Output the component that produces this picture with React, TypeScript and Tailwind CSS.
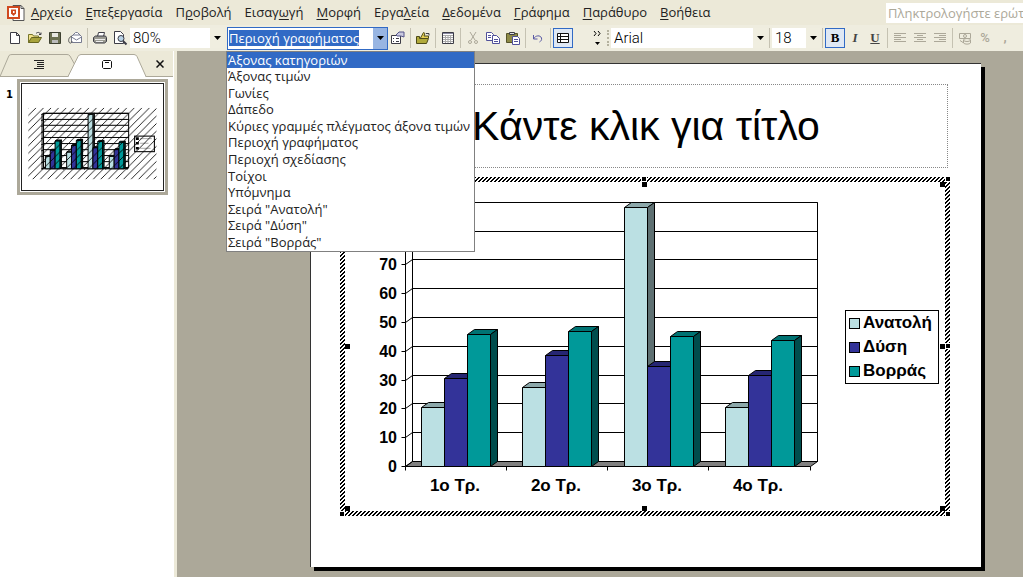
import { useEffect, useRef } from 'react';
import type { ReactNode } from 'react';

const menus = [
  ['', 'Α', 'ρχείο'],
  ['', 'Ε', 'πεξεργασία'],
  ['Π', 'ρ', 'οβολή'],
  ['Εισαγ', 'ω', 'γή'],
  ['', 'Μ', 'ορφή'],
  ['Εργα', 'λ', 'εία'],
  ['', 'Δ', 'εδομένα'],
  ['', 'Γ', 'ράφημα'],
  ['', 'Π', 'αράθυρο'],
  ['', 'Β', 'οήθεια'],
];

const chartObjects = [
  'Άξονας κατηγοριών',
  'Άξονας τιμών',
  'Γωνίες',
  'Δάπεδο',
  'Κύριες γραμμές πλέγματος άξονα τιμών',
  'Περιοχή γραφήματος',
  'Περιοχή σχεδίασης',
  'Τοίχοι',
  'Υπόμνημα',
  'Σειρά "Ανατολή"',
  'Σειρά "Δύση"',
  'Σειρά "Βορράς"',
];

const series = [
  { name: 'Ανατολή', front: '#bbe0e3', top: '#8ca8aa', side: '#5e7072', values: [20.4, 27.4, 90, 20.4] },
  { name: 'Δύση', front: '#333399', top: '#262673', side: '#1a1a4d', values: [30.6, 38.6, 34.6, 31.6] },
  { name: 'Βορράς', front: '#009999', top: '#007373', side: '#004d4d', values: [45.9, 46.9, 45, 43.9] },
];

const categories = ['1ο Τρ.', '2ο Τρ.', '3ο Τρ.', '4ο Τρ.'];
const ticks = [0, 10, 20, 30, 40, 50, 60, 70, 80, 90];

const baseY = 289;
const yOf = (v: number) => baseY - Math.round(v * 2.88);

function Plot() {
  return (
    <g stroke="#000" strokeWidth="1" transform="translate(0.5 0.5)">
      <path d="M65 289 72 284H477L470 289Z" fill="#808080" vectorEffect="non-scaling-stroke" />
      <path d="M72 25H477V284M72 25V284M65 30V289M65 30 72 25" fill="none" vectorEffect="non-scaling-stroke" />
      {ticks.map((t) => (
        <path
          key={t}
          d={`M61 ${yOf(t)}H65L72 ${yOf(t) - 5}H477`}
          fill="none"
          vectorEffect="non-scaling-stroke"
        />
      ))}
      <path d="M65 289V293M166 289V293M267 289V293M368 289V293M470 289V293" vectorEffect="non-scaling-stroke" />
      {categories.map((c, i) =>
        series.map((s, j) => {
          const x = Math.round(81 + i * 101.4) + j * 23;
          const y = yOf(s.values[i]);
          return (
            <g key={c + s.name} strokeLinejoin="round">
              <path d={`M${x} ${y}l7-5h23l-7 5z`} fill={s.top} vectorEffect="non-scaling-stroke" />
              <path d={`M${x + 23} ${y}l7-5V284l-7 5z`} fill={s.side} vectorEffect="non-scaling-stroke" />
              <path d={`M${x} ${y}h23V289h-23z`} fill={s.front} vectorEffect="non-scaling-stroke" />
            </g>
          );
        }),
      )}
    </g>
  );
}

function Chart() {
  const handles = [
    [302, 0], [606, 0],
    [606, 167],
    [0, 335], [606, 335],
  ];
  const inner = [
    [5, 5], [302, 5], [600, 5],
    [5, 167], [600, 167],
    [5, 329], [302, 329], [600, 329],
  ];
  return (
    <svg viewBox="0 0 610 339" className="block w-full" role="img" aria-label="Γράφημα">
      <defs>
        <pattern id="hatch" width="4" height="4" patternUnits="userSpaceOnUse">
          <path d="M2 0h2v1h-2zM1 1h2v1h-2zM0 2h2v1h-2zM3 3h1v1h-1zM0 3h1v1h-1z" fill="#000" />
        </pattern>
      </defs>
      <path d="M0 0H610V339H0ZM5 5V334H605V5Z" fillRule="evenodd" fill="url(#hatch)" />
      {handles.map(([x, y]) => (
        <rect key={`${x}-${y}`} x={x} y={y} width="4" height="4" stroke="#fff" strokeWidth="2" paintOrder="stroke" />
      ))}
      {inner.map(([x, y]) => (
        <rect key={`${x}-${y}`} x={x} y={y} width="5" height="5" />
      ))}
      <Plot />
      <g fontFamily="'Liberation Sans', Arial, sans-serif" fontWeight="700" fontSize="16">
        {ticks.map((t) => (
          <text key={t} x="57" y={yOf(t) + 6} textAnchor="end">{t}</text>
        ))}
        {categories.map((c, i) => (
          <text key={c} x={115 + i * 101} y="314" textAnchor="middle" fontSize="17">{c}</text>
        ))}
        <rect x="505.5" y="133.5" width="93" height="73" fill="#fff" stroke="#000" />
        {series.map((s, i) => (
          <g key={s.name}>
            <rect x="509.5" y={141.5 + i * 24} width="10" height="10" fill={s.front} stroke="#000" />
            <text x="523" y={151 + i * 24} fontSize="17">{s.name}</text>
          </g>
        ))}
      </g>
    </svg>
  );
}

function Thumbnail() {
  return (
    <svg viewBox="0 0 671 504" className="block w-full" aria-hidden="true">
      <defs>
        <pattern id="thumbHatch" width="36" height="36" patternUnits="userSpaceOnUse">
          <path d="M-4 40 40-4M-22 22 22-22M14 58 58 14" stroke="#000" strokeWidth="4" />
        </pattern>
      </defs>
      <g transform="translate(30 114)">
        <Plot />
        <rect x="506" y="134" width="94" height="74" fill="#fff" stroke="#000" strokeWidth="5" />
        <path d="M512 146h14M512 168h14M512 192h14" stroke="#000" strokeWidth="12" />
        <path d="M532 146h56M532 168h40M532 192h50" stroke="#999" strokeWidth="4" />
        <rect width="610" height="339" fill="url(#thumbHatch)" />
      </g>
    </svg>
  );
}

function Icon({ children }: { children: ReactNode }) {
  return (
    <svg viewBox="0 0 16 16" className="size-4" fill="none" stroke="#3c3c46" aria-hidden="true">
      {children}
    </svg>
  );
}

const Caret = () => (
  <svg viewBox="0 0 7 4" className="h-1 w-[7px]" aria-hidden="true">
    <path d="M0 0h7L3.5 4z" />
  </svg>
);

function Tool({ label, active, children }: { label: string; active?: boolean; children: ReactNode }) {
  return (
    <button
      aria-label={label}
      className={`flex h-5 w-5 shrink-0 items-center justify-center ${active ? 'border border-[#316ac5] bg-[#dfe8f4]' : ''}`}
    >
      {children}
    </button>
  );
}

const Sep = () => <span className="mx-0.5 h-5 w-px shrink-0 bg-[#c5c2b2]" />;

function Picker({ label, value, className }: { label: string; value: string; className: string }) {
  return (
    <div className={`relative flex h-5 shrink-0 items-center ${className}`}>
      <select
        aria-label={label}
        defaultValue={value}
        className="h-5 w-full appearance-none bg-linear-to-l from-[#f0eee0] from-[14px] to-white to-[14px] pl-[3px] text-[15px] leading-5 outline-none"
      >
        <option>{value}</option>
      </select>
      <span className="pointer-events-none absolute right-[3px]">
        <Caret />
      </span>
    </div>
  );
}

function ObjectCombo() {
  const ref = useRef<HTMLInputElement>(null);

  useEffect(() => {
    ref.current?.focus();
    ref.current?.select();
  }, []);

  return (
    <div className="relative ml-[3px] flex h-[23px] w-[161px] shrink-0 border border-[#316ac5] bg-white font-['Open_Sans',sans-serif] text-[13px] leading-4 font-normal">
      <input
        ref={ref}
        role="combobox"
        aria-label="Αντικείμενα γραφήματος"
        aria-expanded="true"
        aria-controls="chart-objects"
        defaultValue="Περιοχή γραφήματος"
        className="min-w-0 flex-1 pl-px outline-none selection:bg-[#316ac5] selection:text-white"
      />
      <button aria-label="Άνοιγμα λίστας" className="flex w-3.5 items-center justify-center bg-[#98b5e2]">
        <Caret />
      </button>
      <ul
        id="chart-objects"
        role="listbox"
        className="absolute -left-0.5 top-[23px] z-10 grid h-[201px] w-[249px] auto-rows-fr grid-cols-1 border border-[#808080] bg-white text-[#222]"
      >
        {chartObjects.map((name, i) => (
          <li
            key={name}
            role="option"
            aria-selected={i === 0}
            className={`whitespace-nowrap pl-px ${i === 0 ? 'bg-[#316ac5] text-white' : ''}`}
          >
            {name}
          </li>
        ))}
      </ul>
    </div>
  );
}

function MenuBar() {
  return (
    <nav className="flex h-[25px] items-center pl-[7px] font-['Open_Sans',sans-serif] text-[13px] leading-5 font-normal text-[#222]">
      <svg viewBox="0 0 18 18" className="mr-1.5 size-[18px] shrink-0" aria-hidden="true">
        <path d="M6 1.500h8l3 3v12H6z" fill="#fff" stroke="#555" />
        <path d="M14 1.500v3h3" fill="none" stroke="#555" />
        <rect x="1" y="3" width="11" height="11" fill="#fff" stroke="#d04a20" strokeWidth="2" />
        <path d="M4 5.500h5v4l-2.500 2.500L4 9.500z" fill="#d04a20" />
        <path d="M6 7h1.500v2H6z" fill="#fff" />
      </svg>
      <div className="flex gap-[13px] pb-0.5 whitespace-nowrap">
        {menus.map(([before, key, after]) => (
          <button key={before + key + after}>
            {before}
            <u className="underline-offset-2">{key}</u>
            {after}
          </button>
        ))}
      </div>
      <input
        aria-label="Ερώτηση"
        placeholder="Πληκτρολογήστε ερώτηση"
        className="ml-auto h-5 w-[137px] shrink-0 bg-white pl-0.5 outline-none placeholder:text-[#aca899]"
      />
    </nav>
  );
}

function Toolbar() {
  return (
    <div className="flex h-[26px] items-center bg-[#efeddf] pl-[5px]">
      <Tool label="Δημιουργία">
        <Icon><path d="M3.500 2.500h6l3 3v8h-9zM9.500 2.500v3h3" fill="#fff" /></Icon>
      </Tool>
      <Tool label="Άνοιγμα">
        <Icon>
          <path d="M1.500 12.500v-8h4l1 1.500h5v2" fill="#f3e28a" stroke="#77762a" />
          <path d="M1.500 12.500l3-5h10l-3 5z" fill="#a8a33c" stroke="#66651f" />
          <path d="M9 3.500c2-2 4-1 4.500 1M12 4.500h2v-2" />
        </Icon>
      </Tool>
      <Tool label="Αποθήκευση">
        <Icon>
          <path d="M2.500 2.500h11v11h-11z" fill="#6c7050" stroke="#3d4030" />
          <path d="M5 3h6v4H5z" fill="#e8e8e0" stroke="none" />
          <path d="M5 10h6v3H5z" fill="#bbb" stroke="none" />
        </Icon>
      </Tool>
      <Tool label="Αποστολή">
        <Icon>
          <path d="M4.500 6.500l4-4h2l4 4v6h-10z" fill="#fff" stroke="#777b90" />
          <path d="M4.500 7l5 3 5-3M6 5h7" stroke="#777b90" />
          <path d="M5 6c-3 1-4 4-3 6 1 2 3 1 3-1" stroke="#555" />
        </Icon>
      </Tool>
      <Sep />
      <Tool label="Εκτύπωση">
        <Icon>
          <path d="M5.500 6.500l1-4h6l-1 4" fill="#fff" />
          <path d="M1.500 7.500l2-1.500h10l1 1.500v4l-2 1.500h-9l-2-1.500z" fill="#9a9a92" />
          <path d="M3 9.500h10M4 11.500h7" stroke="#eee" />
        </Icon>
      </Tool>
      <Tool label="Προεπισκόπηση">
        <Icon>
          <path d="M2.500 1.500h6l3 3v9h-9z" fill="#fff" />
          <circle cx="9" cy="8.500" r="3" fill="#b9d3e6" />
          <path d="M11 11l3.500 3.500" strokeWidth="2" />
        </Icon>
      </Tool>
      <Picker label="Ζουμ" value="80%" className="w-[94px]" />
      <ObjectCombo />
      <Tool label="Μορφοποίηση">
        <Icon>
          <path d="M1.500 5.500h9v8h-9zM3 8.500h1M3 11.500h1M6 8.500h3M6 11.500h3" fill="#fff" />
          <path d="M6 5l3-3h5v5l-3-1H7z" fill="#c9c9df" stroke="#55558a" />
        </Icon>
      </Tool>
      <Sep />
      <Tool label="Τύπος γραφήματος">
        <Icon>
          <path d="M5.500 8l3-5.500 1.500 1-1 2.500h4.500v2" fill="#e5cf55" stroke="#4d4a18" />
          <path d="M1.500 13.500v-7h3v2h9l-2 5z" fill="#b1aa3a" stroke="#4d4a18" />
          <path d="M11 3.500h3v2" />
        </Icon>
      </Tool>
      <Sep />
      <Tool label="Πίνακας δεδομένων">
        <Icon>
          <path d="M2.500 2.500h11v11h-11z" fill="#fff" />
          <path d="M3 3.500h10" stroke="#8888a0" />
          <path d="M3 5.500h10M3 7.500h10M3 9.500h10M3 11.500h10M5.500 5v8M8 5v8M10.500 5v8" stroke="#aaa" />
        </Icon>
      </Tool>
      <Sep />
      <Tool label="Αποκοπή">
        <Icon>
          <g stroke="#aca899">
            <path d="M5 2l5 8M11 2L6 10" />
            <circle cx="5" cy="12" r="1.500" />
            <circle cx="11" cy="12" r="1.500" />
          </g>
        </Icon>
      </Tool>
      <Tool label="Αντιγραφή">
        <Icon>
          <g fill="#fff" stroke="#50509a">
            <path d="M1.500 2.500h5l2 2v6h-7zM3 5.500h3M3 7.500h3" />
            <path d="M7.500 5.500h4l3 3v5h-7zM9 9.500h4M9 11.500h4" />
          </g>
        </Icon>
      </Tool>
      <Tool label="Επικόλληση">
        <Icon>
          <path d="M1.500 3.500h11v9h-11z" fill="#8d8a45" stroke="#55532a" />
          <path d="M4.500 2.500h5v2h-5z" fill="#ddd" />
          <path d="M7.500 6.500h5l2 2v6h-7zM9 9.500h4M9 11.500h4" fill="#fff" stroke="#50509a" />
        </Icon>
      </Tool>
      <Sep />
      <Tool label="Αναίρεση">
        <Icon>
          <path d="M3.500 5v4h4M3.500 9c2-4 7-4 8-1 .5 2-.5 3-2 4" stroke="#5a5aa5" />
        </Icon>
      </Tool>
      <Sep />
      <Tool label="Κατά γραμμή" active>
        <Icon>
          <path d="M2.500 3.500h11v9h-11zM2.500 6.500h11M2.500 9.500h11M5.500 3.500v9" fill="#fff" stroke="#111" />
        </Icon>
      </Tool>
      <button aria-label="Περισσότερα" className="ml-3.5 flex w-5 shrink-0 flex-col items-center gap-1.5">
        <svg viewBox="0 0 8 5" className="h-[5px] w-2" fill="none" stroke="#000" aria-hidden="true">
          <path d="M1 0l2 2.500L1 5M5 0l2 2.500L5 5" />
        </svg>
        <svg viewBox="0 0 5 3" className="h-[3px] w-[5px]" aria-hidden="true">
          <path d="M0 0h5L2.500 3z" />
        </svg>
      </button>
      <span className="mr-0.5 h-4 shrink-0 border-l-2 border-dotted border-[#b5b29f]" />
      <Picker label="Γραμματοσειρά" value="Arial" className="w-[156px]" />
      <Sep />
      <Picker label="Μέγεθος" value="18" className="w-[48px]" />
      <Sep />
      <Tool label="Έντονα" active>
        <b className="font-['Liberation_Serif',serif] text-[13px] leading-4 font-bold">B</b>
      </Tool>
      <Tool label="Πλάγια">
        <i className="font-['Liberation_Serif',serif] text-[13px] leading-4 font-bold text-[#444]">I</i>
      </Tool>
      <Tool label="Υπογράμμιση">
        <u className="font-['Liberation_Serif',serif] text-[13px] leading-4 font-bold text-[#444]">U</u>
      </Tool>
      <Sep />
      <Tool label="Στοίχιση αριστερά">
        <Icon><path d="M2 3.500h12M2 5.500h7M2 7.500h12M2 9.500h7M2 11.500h12" stroke="#aca899" /></Icon>
      </Tool>
      <Tool label="Στοίχιση στο κέντρο">
        <Icon><path d="M2 3.500h12M5 5.500h6M2 7.500h12M5 9.500h6M2 11.500h12" stroke="#aca899" /></Icon>
      </Tool>
      <Tool label="Στοίχιση δεξιά">
        <Icon><path d="M2 3.500h12M7 5.500h7M2 7.500h12M7 9.500h7M2 11.500h12" stroke="#aca899" /></Icon>
      </Tool>
      <Sep />
      <Tool label="Νομισματική μορφή">
        <Icon>
          <g stroke="#aca899">
            <path d="M2.500 3.500h11v5h-11z" />
            <circle cx="8" cy="6" r="1.500" />
            <ellipse cx="10" cy="10" rx="3.500" ry="1.500" />
            <path d="M6.500 10v3c1 1.500 6 1.500 7 0v-3M3 10.500l3 2" />
          </g>
        </Icon>
      </Tool>
      <Tool label="Ποσοστό">
        <span className="text-[13px] font-medium text-[#aca899]">%</span>
      </Tool>
      <Tool label="Διαχωριστικό χιλιάδων">
        <span className="text-[13px] font-bold text-[#aca899]">,</span>
      </Tool>
    </div>
  );
}

function SlidePanel() {
  return (
    <aside className="w-[173px] shrink-0 bg-white">
      <div className="relative flex h-[26px] bg-[#ece9d8]">
        <svg viewBox="0 0 173 26" className="absolute inset-0 h-[26px] w-[173px]" aria-hidden="true">
          <path d="M0 25.500 9 4.500Q10 3.500 12 3.500H67Q69 3.500 70 5L75 14" fill="none" stroke="#aca899" />
          <path d="M0 25.500H68L78 5.500Q79 3.500 81 3.500H134Q136 3.500 137 5.500L146 25.500H173V26H0Z" fill="#fff" stroke="#aca899" />
          <path d="M69 25h76v1H69z" fill="#fff" />
        </svg>
        <button aria-label="Διάρθρωση" className="relative flex w-[77px] items-center justify-center">
          <svg viewBox="0 0 10 9" className="h-[9px] w-2.5" stroke="#222" aria-hidden="true">
            <path d="M0 .5h10M3 2.500h7M3 4.500h7M3 6.500h7M0 8.500h10" />
          </svg>
        </button>
        <button aria-label="Διαφάνειες" className="relative flex w-[60px] items-center justify-center">
          <svg viewBox="0 0 10 9" className="h-[9px] w-2.5" fill="none" stroke="#111" aria-hidden="true">
            <path d="M1.500 .5h7l1 1v6l-1 1h-7l-1-1v-6zM3 2.500h4" />
          </svg>
        </button>
        <button aria-label="Κλείσιμο" className="relative ml-[11px] flex w-6 items-center justify-center">
          <svg viewBox="0 0 8 8" className="size-2" stroke="#111" strokeWidth="1.500" aria-hidden="true">
            <path d="M.5.5l7 7M7.500.5l-7 7" />
          </svg>
        </button>
      </div>
      <div className="flex pt-0.5 pr-[5px] pl-1.5">
        <span className="w-[11px] pt-2 font-['DejaVu_Sans',sans-serif] text-[10px] leading-4 font-bold">1</span>
        <div className="flex-1 border-[3px] border-[#aca899] bg-white p-px">
          <div className="border border-[#222]">
            <Thumbnail />
          </div>
        </div>
      </div>
    </aside>
  );
}

export default function App() {
  return (
    <div className="flex min-h-screen flex-col overflow-x-clip bg-[#ece9d8] font-['Roboto','Noto_Sans',sans-serif] font-light text-black">
      <MenuBar />
      <Toolbar />
      <main className="flex flex-1">
        <SlidePanel />
        <div className="w-1 shrink-0 border-l border-white bg-[#ece9d8]" />
        <section className="flex-1 bg-[#aca899] pt-3 pr-[42px] pb-2.5 pl-[133px]">
          <div className="border-t border-l border-[#333] bg-white pt-5 pb-[51px] shadow-[4px_4px_0_#000]">
            <h1 className="mx-[33px] flex h-[84px] items-center justify-center border border-dotted border-[#888] font-['Liberation_Sans',Arial,sans-serif] text-[41px] leading-none font-normal whitespace-nowrap">
              Κάντε κλικ για τίτλο
            </h1>
            <div className="mt-[9px] mr-[31px] ml-[29px]">
              <Chart />
            </div>
          </div>
        </section>
      </main>
    </div>
  );
}
